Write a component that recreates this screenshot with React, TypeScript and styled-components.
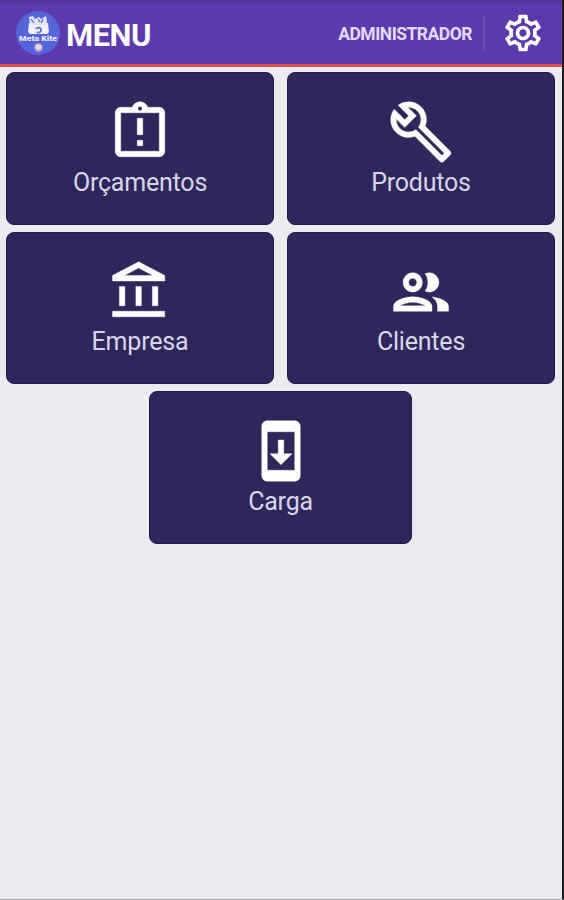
import React from "react";
import styled, { createGlobalStyle } from "styled-components";
import {
  MdOutlineAccountBalance,
  MdOutlineAssignmentLate,
  MdOutlineBuild,
  MdOutlineSettings,
  MdSystemUpdate,
} from "react-icons/md";

const GlobalStyle = createGlobalStyle`
  * { box-sizing: border-box; }
  body { margin: 0; background: #ebeaef; font-family: Roboto, sans-serif; }
`;

const Screen = styled.div`
  width: 564px;
  height: 900px;
  overflow: hidden;
  display: flex;
  flex-direction: column;
  background: #ebeaef;
  border-right: 2px solid #1d1c20;
  border-bottom: 1px solid #aaa9ae;
`;

const Header = styled.header`
  height: 67px;
  flex: none;
  display: flex;
  align-items: center;
  padding: 2px 17px 0 16px;
  background: linear-gradient(#523292 0, #5d39ae 5px);
  border-bottom: 3px solid #d8504f;
`;

const Logo = styled.svg`
  width: 44px;
  height: 44px;
  flex: none;
`;

const Title = styled.h1`
  margin: 5px auto 0 6px;
  color: #fff;
  font-size: 31px;
  line-height: 36px;
  font-weight: 700;
  letter-spacing: -0.5px;
`;

const UserName = styled.span`
  margin-top: 2px;
  color: #e3d9f6;
  font-size: 17.5px;
  font-weight: 700;
  letter-spacing: -0.5px;
`;

const Divider = styled.span`
  width: 2px;
  height: 34px;
  margin: 0 16px 0 11px;
  background: #6d4bb8;
`;

const SettingsButton = styled.button`
  display: flex;
  padding: 0;
  border: 0;
  background: none;
  color: #fff;
`;

const Menu = styled.main`
  display: flex;
  flex-wrap: wrap;
  justify-content: center;
  align-content: flex-start;
  gap: 7px 13px;
  padding: 5px 7px 0 6px;
`;

const Card = styled.button<{ $width: number }>`
  width: ${(p) => p.$width}px;
  height: 152.5px;
  display: flex;
  flex-direction: column;
  align-items: center;
  padding: 26px 0 0;
  border: 1px solid #211955;
  border-radius: 8px;
  background: #2e275b;
  color: #fff;
  font-family: inherit;

  svg {
    flex: none;
    stroke: #fff;
    stroke-width: 0.15px;
  }

  path[fill="none"] {
    stroke: none;
  }
`;

const Label = styled.span`
  margin-top: 2.5px;
  color: #d9d6e6;
  font-size: 25px;
  line-height: 30px;
  letter-spacing: -0.2px;
`;

const PeopleIcon = ({ size }: { size: number }) => (
  <svg width={size} height={size} viewBox="0 0 24 24" fill="currentColor">
    <path d="M9 13.75c-2.34 0-7 1.17-7 3.5V19h14v-1.75c0-2.33-4.66-3.5-7-3.5zM4.34 17c.84-.58 2.87-1.25 4.66-1.25s3.82.67 4.66 1.25H4.34zM9 12c1.93 0 3.5-1.57 3.5-3.5S10.93 5 9 5 5.5 6.57 5.5 8.5 7.07 12 9 12zm0-5c.83 0 1.5.67 1.5 1.5S9.83 10 9 10s-1.5-.67-1.5-1.5S8.17 7 9 7zm7.04 6.81c1.16.84 1.96 1.96 1.96 3.44V19h4v-1.75c0-2.02-3.5-3.17-5.96-3.44zM15 12c1.93 0 3.5-1.57 3.5-3.5S16.93 5 15 5c-.54 0-1.04.13-1.5.35.63.89 1 1.98 1 3.15s-.37 2.26-1 3.15c.46.22.96.35 1.5.35z" />
  </svg>
);

const items = [
  { label: "Orçamentos", Icon: MdOutlineAssignmentLate, width: 268 },
  { label: "Produtos", Icon: MdOutlineBuild, width: 268 },
  { label: "Empresa", Icon: MdOutlineAccountBalance, width: 268 },
  { label: "Clientes", Icon: PeopleIcon, width: 268 },
  { label: "Carga", Icon: MdSystemUpdate, width: 263 },
];

export default function App() {
  return (
    <>
      <GlobalStyle />
      <Screen>
        <Header>
          <Logo viewBox="0 0 44 44">
            <circle cx="22" cy="22" r="22" fill="#5664dc" />
            <path d="M13 12h19l1 9-2 2H14l-2-2z" fill="#f0f1fc" />
            <path d="M13 6l4-1 2 3 4-2 2 2 5-3 1 5-1 4H14z" fill="#dfe2fa" />
            <path d="M15 8l3 4m4-4 2 3m3-3-2 4" stroke="#5a60b4" strokeWidth="1.2" />
            <path d="M20 18c1-2 5-2 5 1s-3 3-4 2" fill="none" stroke="#6670d5" strokeWidth="1.8" />
            <text x="22" y="30" textAnchor="middle" textLength="38" lengthAdjust="spacingAndGlyphs" fontFamily="Roboto, sans-serif" fontSize="7" fontWeight="900" fill="#e6e8ff">Meta Kite</text>
            <circle cx="22.5" cy="36.5" r="4.3" fill="#b8a7ce" />
            <circle cx="22.5" cy="36" r="2.8" fill="#f0d5cc" />
          </Logo>
          <Title>MENU</Title>
          <UserName>ADMINISTRADOR</UserName>
          <Divider />
          <SettingsButton aria-label="Configurações">
            <MdOutlineSettings size={44} />
          </SettingsButton>
        </Header>
        <Menu>
          {items.map(({ label, Icon, width }) => (
            <Card key={label} $width={width}>
              <Icon size={66} />
              <Label>{label}</Label>
            </Card>
          ))}
        </Menu>
      </Screen>
    </>
  );
}
